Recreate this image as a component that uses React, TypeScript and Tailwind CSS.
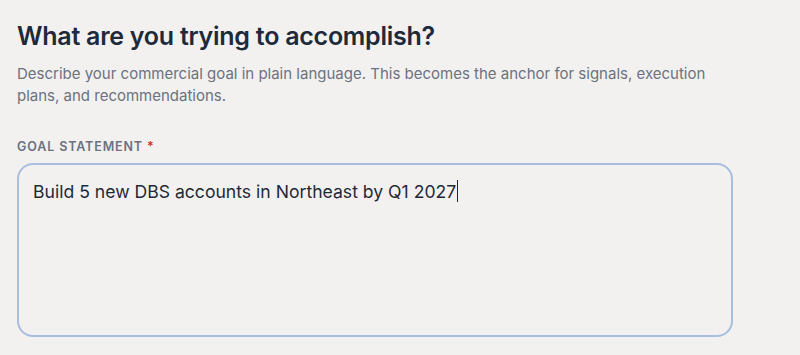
export default function App() {
  return (
    <main className="min-h-screen w-full bg-[#f2f1ef] font-['Inter',sans-serif]">
      <div className="px-[17px] pt-[21px]">
        <h1 className="text-[25px] font-semibold leading-[31px] tracking-[-0.01em] text-[#1e293b]">
          What are you trying to accomplish?
        </h1>
        <p className="mt-[11px] max-w-[720px] text-[15px] leading-[22px] text-[#6b7280]">
          Describe your commercial goal in plain language. This becomes the anchor for signals, execution
          plans, and recommendations.
        </p>

        <label className="mt-[32px] block text-[12.5px] font-semibold uppercase leading-4 tracking-[0.07em] text-[#6b7280]">
          Goal Statement <span className="text-[#dc2626]">*</span>
        </label>

        <div className="mt-[8px] h-[174px] w-[716px] rounded-[16px] border-2 border-[#a9bddf] bg-[#f2f1ef] px-[14px] pt-[11px]">
          <div className="text-[17.6px] leading-[28px] text-[#1f2937]">
            Build 5 new DBS accounts in Northeast by Q1 2027
            <span className="ml-[1px] inline-block h-[22px] w-[1px] translate-y-[4px] bg-[#1f2937] align-baseline" />
          </div>
        </div>
      </div>
    </main>
  );
}
